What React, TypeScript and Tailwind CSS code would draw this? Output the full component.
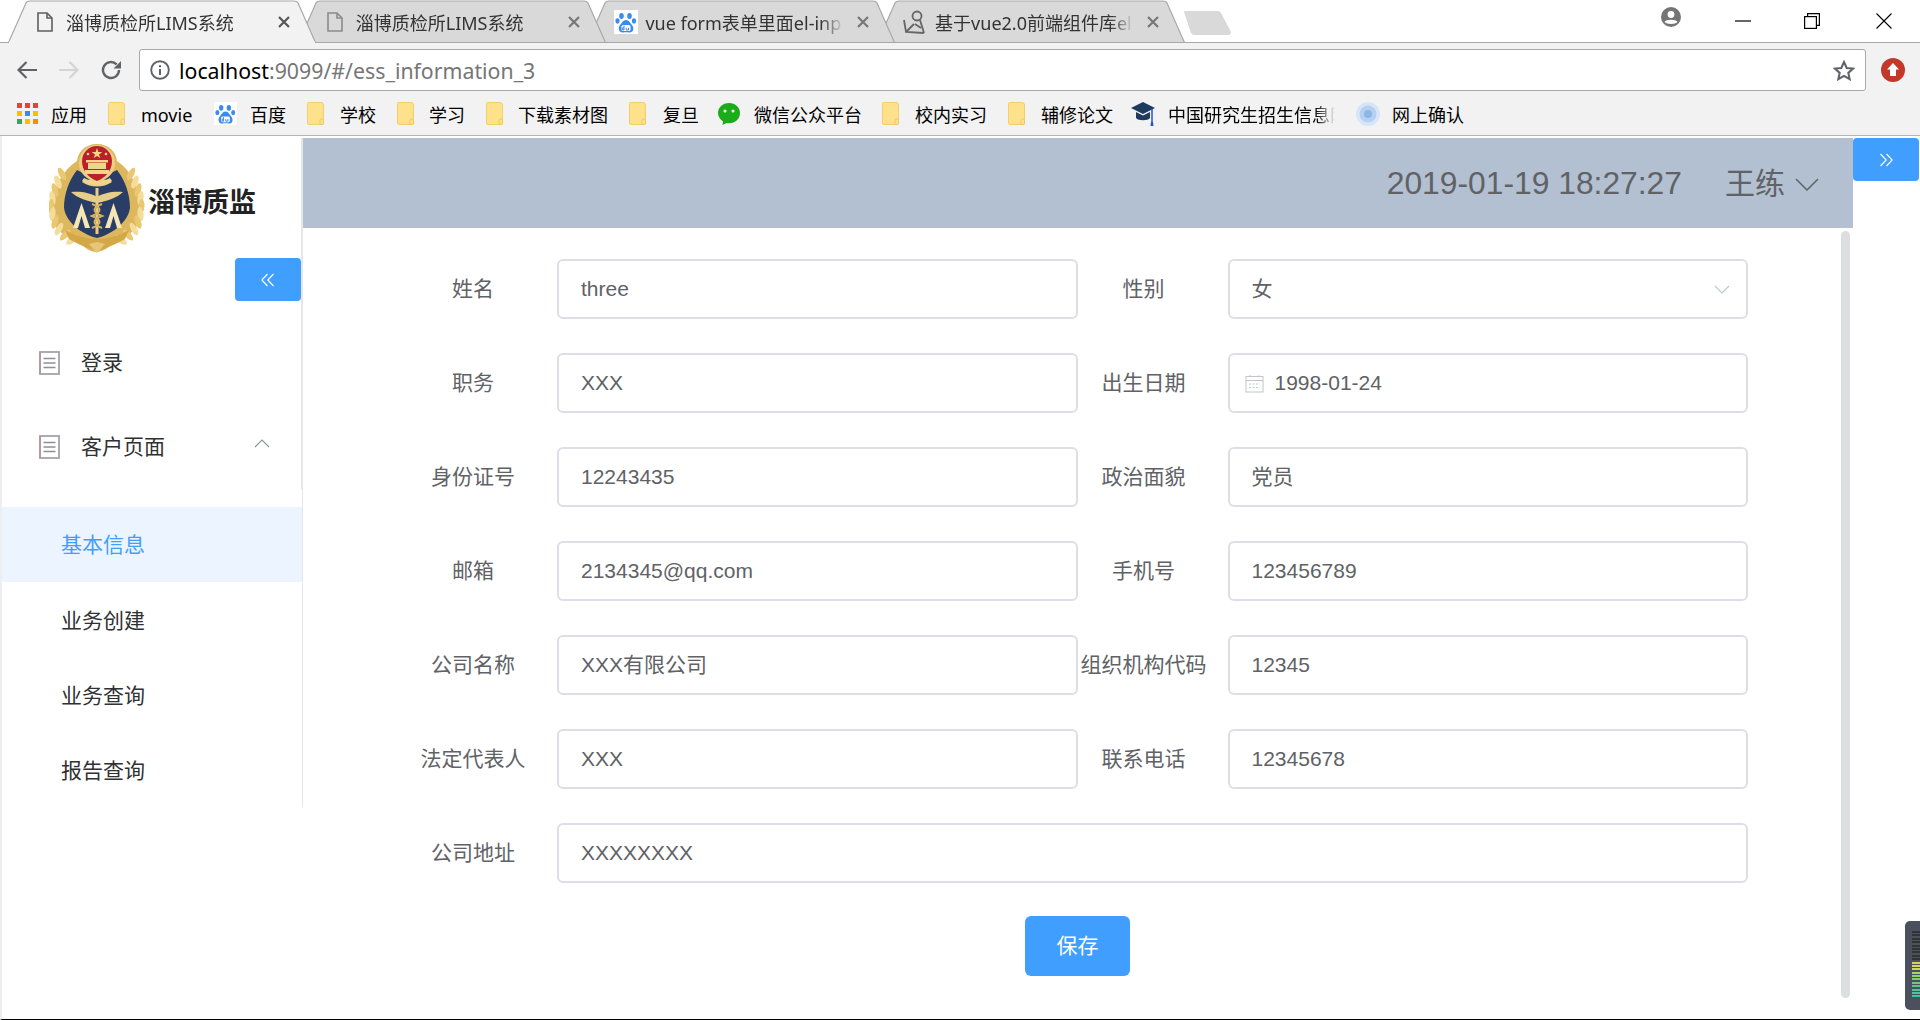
import React from "react";

const F = "[font-family:'Liberation_Sans','Noto_Sans_CJK_SC',sans-serif]";
const C = "[font-family:'Noto_Sans','Noto_Sans_CJK_SC',sans-serif]";

function TabShape({ active }: { active: boolean }) {
  return (
    <svg className="absolute left-0 top-0" width="308" height="43" viewBox="0 0 308 43">
      <path
        d="M0.5 42.5 L18 3 Q19 1 22 1 L286 1 Q289 1 290 3 L307.5 42.5 Z"
        fill={active ? "#f2f2f2" : "#d9d9d9"}
        stroke="#a8a8a8"
        strokeWidth="1.2"
      />
      {active && <rect x="1" y="41.5" width="306" height="2" fill="#f2f2f2" />}
    </svg>
  );
}

function FileIcon({ color }: { color: string }) {
  return (
    <svg width="16" height="20" viewBox="0 0 16 20" fill="none" stroke={color} strokeWidth="1.6">
      <path d="M1 1 H10 L15 6 V19 H1 Z" />
      <path d="M10 1 V6 H15" />
    </svg>
  );
}

function BaiduPaw({ size }: { size: number }) {
  return (
    <svg width={size} height={size} viewBox="0 0 24 24" className="shrink-0">
      <rect width="24" height="24" fill="#fff" />
      <ellipse cx="7.5" cy="6" rx="2.3" ry="3" fill="#3a8bf0" />
      <ellipse cx="15.5" cy="6" rx="2.3" ry="3" fill="#3a8bf0" />
      <ellipse cx="3.5" cy="11" rx="2.1" ry="2.7" fill="#3a8bf0" />
      <ellipse cx="20" cy="11" rx="2.1" ry="2.7" fill="#3a8bf0" />
      <path d="M12 10 C9 10 8 13 6 15 C3.5 18 5 23 9 22.5 C11 22 13 22 15 22.5 C19.5 23 20.5 18 18 15 C16 13 15 10 12 10 Z" fill="#3a8bf0" />
      <rect x="7.5" y="15" width="9" height="6" rx="1.5" fill="#fff" />
      <path d="M10 15.5 V20 H8.6 V17.8 H10 M12.3 17.8 V20 H14.5 V17.8" fill="none" stroke="#3a8bf0" strokeWidth="1" />
    </svg>
  );
}

function Tab({
  title,
  active,
  z,
  icon,
  first,
}: {
  title: string;
  active?: boolean;
  z: string;
  icon: React.ReactNode;
  first?: boolean;
}) {
  return (
    <div className={`relative h-[43px] w-[308px] shrink-0 ${z} ${first ? "ml-[8px]" : "-ml-[18.3px]"}`}>
      <TabShape active={!!active} />
      <div className="relative flex h-[43px] items-center pl-[29px] pr-[25px]">
        <div className="flex w-[29px] shrink-0 items-center">{icon}</div>
        <div className="min-w-0 flex-1 overflow-hidden whitespace-nowrap pt-[2px] text-[18px] leading-[26px] text-[#333] [mask-image:linear-gradient(to_right,#000_88%,transparent)]">
          {title}
        </div>
        <svg className="ml-[12px] shrink-0" width="14" height="14" viewBox="0 0 14 14" stroke={active ? "#555" : "#777"} strokeWidth="2.2">
          <path d="M2 2 L12 12 M12 2 L2 12" />
        </svg>
      </div>
    </div>
  );
}

function Folder() {
  return (
    <svg width="17" height="23" viewBox="0 0 17 23" className="shrink-0">
      <path d="M1.5 0.5 H14 Q16.5 0.5 16.5 3 V21 Q16.5 22.5 15 22.5 H2 Q0.5 22.5 0.5 21 V1.5 Q0.5 0.5 1.5 0.5 Z" fill="#fde28b" stroke="#f2cf6b" />
      <rect x="13" y="17" width="3.5" height="5.5" rx="1.2" fill="#fde28b" stroke="#e9c35c" strokeWidth="0.8" />
    </svg>
  );
}

function Bookmark({ icon, text, gap, w }: { icon: React.ReactNode; text: string; gap: string; w: string }) {
  return (
    <div className={`flex shrink-0 items-center ${gap}`}>
      {icon}
      <span className={`${w} whitespace-nowrap pt-[3px] text-[18px] leading-[26px] text-black`}>{text}</span>
    </div>
  );
}

function AppsGrid() {
  const c = ["#ea4335", "#ea4335", "#ea4335", "#fbbc05", "#4285f4", "#fbbc05", "#34a853", "#fbbc05", "#fb8c00"];
  return (
    <svg width="21" height="21" viewBox="0 0 21 21" className="shrink-0">
      {c.map((f, i) => (
        <rect key={i} x={(i % 3) * 8} y={Math.floor(i / 3) * 8} width="5" height="5" fill={f} />
      ))}
    </svg>
  );
}

function MenuIcon() {
  return (
    <svg width="21" height="24" viewBox="0 0 21 24" fill="none" className="shrink-0">
      <rect x="1" y="1" width="19" height="22" stroke="#a3a3ad" strokeWidth="1.8" />
      <path d="M1 1 V23" stroke="#b08f80" strokeWidth="1" />
      <path d="M4.5 7.5 H16.5 M4.5 12 H16.5 M4.5 16.5 H16.5" stroke="#8f8f99" strokeWidth="1.4" />
    </svg>
  );
}

function Emblem() {
  const leaves = [
    [13, 30, -28], [9, 38, -22], [6, 46, -16], [3.5, 54, -10], [2.5, 62, -2], [3.5, 70, 8], [6, 78, 18], [10, 85, 30], [16, 91, 42], [23, 96, 54],
  ];
  return (
    <svg width="96" height="110" viewBox="0 0 96 110" className="shrink-0">
      <path d="M48 0 C36 0 29 8 28 17 C14 26 4 44 0 66 C3 84 16 94 30 98 C35 104 42 108 47 108 C53 108 60 104 65 98 C79 94 91 84 94 66 C90 44 82 26 68 17 C67 8 60 0 48 0 Z" fill="#dcb75e" />
      {leaves.map(([x, y, r], i) => (
        <g key={i}>
          <ellipse cx={x} cy={y} rx="3" ry="7" fill={i % 2 ? "#f4dc9a" : "#e9c871"} transform={`rotate(${r} ${x} ${y})`} />
          <ellipse cx={95 - x} cy={y} rx="3" ry="7" fill={i % 2 ? "#f4dc9a" : "#e9c871"} transform={`rotate(${-r} ${95 - x} ${y})`} />
        </g>
      ))}
      <path d="M28 26 C20 36 15 50 15 64 C17 78 32 90 48 94 C64 90 79 78 81 64 C81 50 76 36 68 26 L48 36 Z" fill="#2a3d66" />
      <circle cx="48" cy="19" r="18" fill="#eccf84" />
      <path d="M48 33 L33 38 C42 44 54 44 63 38 Z" fill="#eccf84" />
      <path d="M33 17 A15 15 0 0 1 63 17 C63 27 56 34 48 37 C40 34 33 27 33 17 Z" fill="#b8202a" />
      <path d="M36 26 H60 V30 H36 Z M39 19 H57 V25 H39 Z M37 16 H59 V18.5 H37 Z" fill="#f0d68a" />
      <path d="M33 37 C39 42 57 42 63 37 L61 34 C55 38 41 38 35 34 Z" fill="#f0d68a" />
      <path d="M48 4 L49.3 8 L53.3 8 L50 10.4 L51.3 14 L48 12 L44.7 14 L46 10.4 L42.7 8 L46.7 8 Z" fill="#f3d77f" />
      <circle cx="39" cy="10" r="1.3" fill="#f3d77f" />
      <circle cx="57" cy="10" r="1.3" fill="#f3d77f" />
      <path d="M22 48 C32 47 42 49 48 53 C54 49 64 47 74 48 C68 54 58 57 48 59 C38 57 28 54 22 48 Z" fill="#e8cd88" />
      <rect x="46.5" y="44" width="3" height="46" fill="#e8cd88" />
      <path d="M24 84 L32.5 59 L41 84 Z M56 84 L64.5 59 L73 84 Z" fill="#f5e6b5" />
      <path d="M29 84 L32.5 72 L36 84 Z M61 84 L64.5 72 L68 84 Z" fill="#2a3d66" />
      <path d="M43 60 C53 64 53 68 43 72 C53 76 53 80 43 84 M53 60 C43 64 43 68 53 72 C43 76 43 80 53 84" fill="none" stroke="#d9b45c" strokeWidth="2" />
      <path d="M16 86 C27 92 37 95 48 95 C59 95 69 92 80 86 L76 95 C68 100 57 104 48 107 C39 104 28 100 20 95 Z" fill="#d4a847" />
      <path d="M40 100 L48 98 L56 100 L48 109 Z" fill="#e6c679" />
    </svg>
  );
}

function Field({ label, children }: { label: string; children: React.ReactNode }) {
  return (
    <div className="flex h-[60px] min-w-0 flex-1 items-center">
      <label className="w-[150px] shrink-0 whitespace-nowrap pr-[18px] text-center text-[21px] text-[#606266]">{label}</label>
      {children}
    </div>
  );
}

function Input({ value }: { value: string }) {
  return (
    <div className="flex h-[60px] min-w-0 flex-1 items-center rounded-[6px] border-2 border-[#dcdfe6] bg-white pl-[22px] text-[21px] text-[#606266]">
      {value}
    </div>
  );
}

const rows: [string, string, string, string][] = [
  ["身份证号", "12243435", "政治面貌", "党员"],
  ["邮箱", "2134345@qq.com", "手机号", "123456789"],
  ["公司名称", "XXX有限公司", "组织机构代码", "12345"],
  ["法定代表人", "XXX", "联系电话", "12345678"],
];

const leds = ["#333", "#333", "#333", "#333", "#333", "#333", "#333", "#333", "#333", "#d9d24a", "#d4d850", "#c8d858", "#a8d460", "#90d068", "#80cc70", "#70c878", "#60c488", "#50c498", "#48c4a0", "#40c4a8"];

export default function App() {
  return (
    <div className={`flex h-[1020px] w-[1920px] flex-col overflow-hidden bg-white ${F}`}>
      {/* Tab strip */}
      <div className={`relative flex h-[43px] shrink-0 items-start border-b border-[#a8a8a8] bg-white ${C}`}>
        <Tab first active z="z-40" title="淄博质检所LIMS系统" icon={<FileIcon color="#5f5f5f" />} />
        <Tab z="z-30" title="淄博质检所LIMS系统" icon={<FileIcon color="#8a8a8a" />} />
        <Tab z="z-20" title="vue form表单里面el-inp" icon={<div className="-ml-[2px]"><BaiduPaw size={24} /></div>} />
        <Tab
          z="z-10"
          title="基于vue2.0前端组件库el"
          icon={
            <svg width="24" height="26" viewBox="0 0 24 26" fill="none" stroke="#666" strokeWidth="1.8" className="-ml-[3px]">
              <circle cx="14" cy="7" r="4.5" />
              <path d="M1 11 L3 23 L21 24 M3 23 L11 15 M17 11 L21 24 M12 15 L18 19" />
            </svg>
          }
        />
        <svg className="-ml-[3px] mt-[10px] shrink-0" width="50" height="26" viewBox="0 0 50 26">
          <path d="M2 2 Q2 1 4 1 H36 Q38 1 39 3 L49 22 Q49 25 46 25 H12 Q10 25 9 23 Z" fill="#d9d9d9" />
        </svg>
        <div className="ml-auto flex h-[42px] items-center">
          <svg width="20" height="20" viewBox="0 0 20 20" className="mb-[8px] mr-[54px]">
            <circle cx="10" cy="10" r="10" fill="#757575" />
            <circle cx="10" cy="7.5" r="3.4" fill="#fff" />
            <path d="M3.5 15 C5 12 15 12 16.5 15 C14.5 17.5 5.5 17.5 3.5 15 Z" fill="#fff" />
          </svg>
          <svg width="16" height="16" viewBox="0 0 16 16" className="mr-[53px]">
            <path d="M0 8 H16" stroke="#000" strokeWidth="1.2" />
          </svg>
          <svg width="16" height="16" viewBox="0 0 16 16" fill="none" stroke="#000" strokeWidth="1.2" className="mr-[56px]">
            <rect x="0.6" y="3.6" width="11.8" height="11.8" />
            <path d="M3.6 3.6 V0.6 H15.4 V12.4 H12.4" />
          </svg>
          <svg width="16" height="16" viewBox="0 0 16 16" className="mr-[28px]">
            <path d="M0.5 0.5 L15.5 15.5 M15.5 0.5 L0.5 15.5" stroke="#000" strokeWidth="1.1" />
          </svg>
        </div>
      </div>

      {/* Toolbar */}
      <div className={`flex h-[49px] shrink-0 items-center bg-[#f2f2f2] pl-[17px] pt-[5px] ${C}`}>
        <svg width="20" height="18" viewBox="0 0 20 18" fill="none" stroke="#5f6368" strokeWidth="2.2" className="mr-[22px]">
          <path d="M20 9 H2 M9.5 1 L1.5 9 L9.5 17" />
        </svg>
        <svg width="20" height="18" viewBox="0 0 20 18" fill="none" stroke="#d4d4d4" strokeWidth="2.2" className="mr-[22px]">
          <path d="M0 9 H18 M10.5 1 L18.5 9 L10.5 17" />
        </svg>
        <svg width="21" height="20" viewBox="0 0 21 20" fill="none" className="mr-[17px]">
          <path d="M18 10 A8 8 0 1 1 15.6 4.3" stroke="#5f6368" strokeWidth="2.4" />
          <path d="M20 1 V8.5 H12.5 Z" fill="#5f6368" />
        </svg>
        <div className="flex h-[42px] w-[1727px] items-center rounded-[3px] border border-[#a9a9a9] bg-white pl-[10px] pr-[10px]">
          <svg width="20" height="20" viewBox="0 0 20 20" fill="none" className="mr-[9px] shrink-0">
            <circle cx="10" cy="10" r="8.8" stroke="#5f6368" strokeWidth="1.9" />
            <rect x="9" y="9" width="2" height="6" fill="#5f6368" />
            <rect x="9" y="5.2" width="2" height="2" fill="#5f6368" />
          </svg>
          <span className="pt-[2px] text-[21.3px] leading-[30px] text-black">localhost</span>
          <span className="pt-[2px] text-[21.3px] leading-[30px] text-[#767676]">:9099/#/ess_information_3</span>
          <svg width="22" height="21" viewBox="0 0 22 21" fill="none" stroke="#5f6368" strokeWidth="2" className="ml-auto">
            <path d="M11 2 L13.7 8 L20 8.6 L15.3 12.9 L16.7 19.2 L11 15.9 L5.3 19.2 L6.7 12.9 L2 8.6 L8.3 8 Z" />
          </svg>
        </div>
        <svg width="24" height="24" viewBox="0 0 24 24" className="ml-[15px] shrink-0">
          <circle cx="12" cy="12" r="12" fill="#c0392b" />
          <path d="M12 5 L18 11.5 H15 V18 H9 V11.5 H6 Z" fill="#fff" />
        </svg>
      </div>

      {/* Bookmarks */}
      <div className={`flex h-[44px] shrink-0 items-center gap-[21px] border-b border-[#b4b4b4] bg-[#f2f2f2] pl-[17px] ${C}`}>
        <Bookmark icon={<AppsGrid />} text="应用" gap="gap-[13px]" w="w-[36px]" />
        <Bookmark icon={<Folder />} text="movie" gap="gap-[16px]" w="w-[52px]" />
        <Bookmark icon={<BaiduPaw size={23} />} text="百度" gap="gap-[13px]" w="w-[36px]" />
        <Bookmark icon={<Folder />} text="学校" gap="gap-[16px]" w="w-[36px]" />
        <Bookmark icon={<Folder />} text="学习" gap="gap-[15px]" w="w-[36px]" />
        <Bookmark icon={<Folder />} text="下载素材图" gap="gap-[15px]" w="w-[90px]" />
        <Bookmark icon={<Folder />} text="复旦" gap="gap-[17px]" w="w-[36px]" />
        <Bookmark
          icon={
            <svg width="24" height="24" viewBox="0 0 24 24" className="-ml-[3px] shrink-0">
              <path d="M12 1 C5.5 1 1 5.5 1 11 C1 14.5 3 17.5 6 19.5 L5.5 23 L9.5 21 C10.3 21.1 11.1 21.2 12 21.2 C18.5 21.2 23 16.5 23 11 C23 5.5 18.5 1 12 1 Z" fill="#1aad19" />
              <circle cx="8" cy="9" r="1.5" fill="#fff" />
              <circle cx="16" cy="9" r="1.5" fill="#fff" />
            </svg>
          }
          text="微信公众平台"
          gap="gap-[13px]"
          w="w-[107px]"
        />
        <Bookmark icon={<Folder />} text="校内实习" gap="gap-[16px]" w="w-[72px]" />
        <Bookmark icon={<Folder />} text="辅修论文" gap="gap-[16px]" w="w-[72px]" />
        <Bookmark
          icon={
            <svg width="24" height="26" viewBox="0 0 24 26" className="-ml-[3px] shrink-0">
              <path d="M12 1 L24 7 L12 13 L0 7 Z" fill="#1d3a5f" />
              <path d="M5 11 V17 C7 20 17 20 19 17 V11 L12 14.5 Z" fill="#1d3a5f" />
              <path d="M21 8 V21" stroke="#2a4fcf" strokeWidth="1.5" />
              <path d="M20 21 H22 L22.5 25 H19.5 Z" fill="#2a4fcf" />
            </svg>
          }
          text="中国研究生招生信息网"
          gap="gap-[13px]"
          w="w-[180px] -mr-[13px] [mask-image:linear-gradient(to_right,#000_82%,transparent_93%)]"
        />
        <Bookmark
          icon={
            <svg width="24" height="24" viewBox="0 0 24 24" className="shrink-0">
              <circle cx="12" cy="12" r="12" fill="#d6e6f8" />
              <circle cx="12" cy="12" r="8.5" fill="#b5d0f1" />
              <circle cx="12" cy="12" r="4" fill="#8fb5e6" />
            </svg>
          }
          text="网上确认"
          gap="gap-[12px]"
          w="w-[72px]"
        />
      </div>

      {/* Page */}
      <div className="flex min-h-0 flex-1 border-b border-black border-l-2 border-l-[#eeeeee]">
        {/* Sidebar */}
        <aside className="flex w-[301px] shrink-0 flex-col self-start">
          <div className="mt-[2px] flex h-[120px] items-start border-r-2 border-[#e6e6e6] pl-[47px] pt-[6px]">
            <Emblem />
            <span className="ml-[3px] mt-[41px] whitespace-nowrap text-[27px] font-bold leading-[36px] text-[#222]">淄博质监</span>
          </div>
          <div className="flex h-[63px] justify-end border-r-2 border-[#e6e6e6]">
            <div className="flex h-[43px] w-[66px] items-center justify-center rounded-[4px] bg-[#409eff]">
              <svg width="14" height="14" viewBox="0 0 14 14" fill="none" stroke="#fff" strokeWidth="1.1">
                <path d="M6.5 1 L0.8 7 L6.5 13 M12.5 1 L6.8 7 L12.5 13" />
              </svg>
            </div>
          </div>
          <div className="flex h-[84px] items-center gap-[21px] border-r-2 border-[#e6e6e6] pl-[37px] text-[21px] text-[#303133]">
            <MenuIcon />
            <span>登录</span>
          </div>
          <div className="flex h-[84px] items-center gap-[21px] border-r-2 border-[#e6e6e6] pl-[37px] text-[21px] text-[#303133]">
            <MenuIcon />
            <span>客户页面</span>
            <svg width="16" height="9" viewBox="0 0 16 9" fill="none" stroke="#909399" strokeWidth="1.1" className="mb-[8px] ml-[68px]">
              <path d="M1 8 L8 1 L15 8" />
            </svg>
          </div>
          <div className="h-[18px] border-r border-[#e6e6e6]" />
          <div className="flex h-[75px] items-center border-r border-[#e6e6e6] bg-[#ecf5ff] pl-[59px] text-[21px] text-[#409eff]">基本信息</div>
          <div className="flex h-[75px] items-center border-r border-[#e6e6e6] pl-[59px] pt-[2px] text-[21px] text-[#303133]">业务创建</div>
          <div className="flex h-[75px] items-center border-r border-[#e6e6e6] pl-[59px] pt-[2px] text-[21px] text-[#303133]">业务查询</div>
          <div className="flex h-[75px] items-center border-r border-[#e6e6e6] pl-[59px] pt-[2px] text-[21px] text-[#303133]">报告查询</div>
        </aside>

        {/* Main */}
        <main className="flex w-[1550px] shrink-0 flex-col pt-[2px]">
          <div className="flex h-[90px] shrink-0 items-center justify-end bg-[#b3c0d1] pr-[34px] text-[#606266]">
            <span className="mr-[43px] pt-[2px] text-[31.8px]">2019-01-19 18:27:27</span>
            <span className="text-[30px]">王练</span>
            <svg width="24" height="13" viewBox="0 0 24 13" fill="none" stroke="#606266" strokeWidth="1.5" className="ml-[10px] mt-[2px]">
              <path d="M1 1 L12 12 L23 1" />
            </svg>
          </div>
          <div className="relative flex min-h-0 flex-1 flex-col">
            <div className="absolute bottom-[21px] right-[3px] top-[3px] w-[9px] rounded-full bg-[#dcdee0]" />
            <form className="ml-[104px] mt-[31px] flex w-[1341px] flex-col gap-[34px]">
              <div className="flex">
                <Field label="姓名">
                  <Input value="three" />
                </Field>
                <Field label="性别">
                  <div className="flex h-[60px] min-w-0 flex-1 items-center justify-between rounded-[6px] border-2 border-[#dcdfe6] bg-white pl-[22px] pr-[16px] text-[21px] text-[#606266]">
                    <span>女</span>
                    <svg width="16" height="9" viewBox="0 0 16 9" fill="none" stroke="#c0c4cc" strokeWidth="1.1">
                      <path d="M1 1 L8 8 L15 1" />
                    </svg>
                  </div>
                </Field>
              </div>
              <div className="flex">
                <Field label="职务">
                  <Input value="XXX" />
                </Field>
                <Field label="出生日期">
                  <div className="flex h-[60px] min-w-0 flex-1 items-center rounded-[6px] border-2 border-[#dcdfe6] bg-white pl-[15px] text-[21px] text-[#606266]">
                    <svg width="19" height="19" viewBox="0 0 19 19" fill="none" stroke="#c0c4cc" className="mr-[11px]">
                      <rect x="1" y="2.5" width="17" height="15.5" />
                      <path d="M1 6.5 H18" />
                      <path d="M5 1 V3 M14 1 V3" />
                      <path d="M4 10 H15 M4 13.5 H15" strokeDasharray="2 1.5" />
                    </svg>
                    1998-01-24
                  </div>
                </Field>
              </div>
              {rows.map((r) => (
                <div className="flex" key={r[0]}>
                  <Field label={r[0]}>
                    <Input value={r[1]} />
                  </Field>
                  <Field label={r[2]}>
                    <Input value={r[3]} />
                  </Field>
                </div>
              ))}
              <div className="flex">
                <Field label="公司地址">
                  <Input value="XXXXXXXX" />
                </Field>
              </div>
              <div className="-mt-[1px] flex justify-center">
                <button type="button" className="flex h-[60px] w-[105px] items-center justify-center rounded-[6px] bg-[#409eff] text-[21px] text-white">
                  保存
                </button>
              </div>
            </form>
          </div>
        </main>

        {/* Right */}
        <div className="relative min-w-0 flex-1 pt-[2px]">
          <div className="flex h-[43px] w-[66px] items-center justify-center rounded-[4px] bg-[#409eff]">
            <svg width="14" height="14" viewBox="0 0 14 14" fill="none" stroke="#fff" strokeWidth="1.1">
              <path d="M1.5 1 L7.2 7 L1.5 13 M7.5 1 L13.2 7 L7.5 13" />
            </svg>
          </div>
          <div className="absolute bottom-[9px] right-0 flex h-[89px] w-[15px] flex-col items-start gap-[1.4px] rounded-l-[5px] bg-[#4b505e] pl-[7px] pt-[10px]">
            {leds.map((c, i) => (
              <div key={i} className="h-[2px] w-[8px]" style={{ backgroundColor: c }} />
            ))}
          </div>
        </div>
      </div>
    </div>
  );
}
